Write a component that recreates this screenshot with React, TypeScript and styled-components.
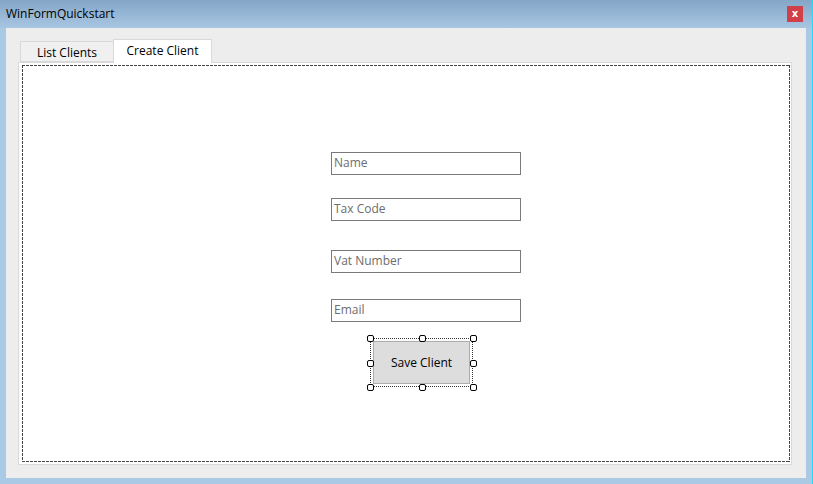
import React from "react";
import styled, { createGlobalStyle } from "styled-components";

const GlobalStyle = createGlobalStyle`
  html, body {
    margin: 0;
    padding: 0;
    background: #a9c9e5;
  }
  * {
    box-sizing: border-box;
  }
`;

const dashes = (color: string, on: number, off: number) => `
  repeating-linear-gradient(90deg, ${color} 0 ${on}px, transparent ${on}px ${on + off}px) left top / 100% 1px no-repeat,
  repeating-linear-gradient(90deg, ${color} 0 ${on}px, transparent ${on}px ${on + off}px) left bottom / 100% 1px no-repeat,
  repeating-linear-gradient(180deg, ${color} 0 ${on}px, transparent ${on}px ${on + off}px) left top / 1px 100% no-repeat,
  repeating-linear-gradient(180deg, ${color} 0 ${on}px, transparent ${on}px ${on + off}px) right top / 1px 100% no-repeat
`;

const Window = styled.div`
  width: 813px;
  height: 484px;
  display: flex;
  flex-direction: column;
  background: linear-gradient(180deg, #84a6c7 0px, #a7c6e2 28px, #a9c9e5 29px);
  border-right: 1px solid #1fdcf8;
  font-family: "Open Sans", "Noto Sans", sans-serif;
`;

const TitleBar = styled.div`
  height: 28px;
  flex: none;
  display: flex;
  align-items: center;
  justify-content: space-between;
  padding: 0 9px 2px 6px;
`;

const Title = styled.span`
  font-size: 12px;
  color: #000;
`;

const CloseButton = styled.div`
  width: 16px;
  height: 16px;
  margin-top: 2px;
  background: #d13f48;
  color: #fff;
  font-family: "DejaVu Sans", sans-serif;
  font-weight: bold;
  font-size: 10px;
  line-height: 15px;
  text-align: center;
`;

const Client = styled.div`
  flex: 1;
  margin: 0 6px 6px 6px;
  background: #ededed;
  padding: 12px 14px 13px 12px;
  display: flex;
  flex-direction: column;
`;

const TabStrip = styled.div`
  height: 22px;
  display: flex;
  align-items: flex-end;
  padding-left: 2px;
  position: relative;
  z-index: 1;
`;

const Tab = styled.div<{ $active?: boolean }>`
  height: ${(p) => (p.$active ? "24px" : "21px")};
  margin-bottom: ${(p) => (p.$active ? "-1px" : "0")};
  width: ${(p) => (p.$active ? "99px" : "94px")};
  border: 1px solid #d9d9d9;
  border-bottom: ${(p) => (p.$active ? "none" : "1px solid #d9d9d9")};
  margin-left: ${(p) => (p.$active ? "-1px" : "0")};
  background: ${(p) => (p.$active ? "#fff" : "#f0f0f0")};
  font-size: 12px;
  color: #000;
  display: flex;
  align-items: center;
  justify-content: center;
  padding-top: ${(p) => (p.$active ? "0" : "2px")};
  padding-bottom: ${(p) => (p.$active ? "3px" : "0")};
`;

const Panel = styled.div`
  flex: 1;
  border: 1px solid #d9d9d9;
  background: #fff;
  padding: 2px 1px 2px 3px;
  display: flex;
`;

const DesignSurface = styled.div`
  flex: 1;
  background: ${dashes("#444", 3, 1)}, #fff;
  padding: 87px 0 0 309px;
  display: flex;
  flex-direction: column;
  align-items: flex-start;
`;

const Field = styled.div<{ $gap: number }>`
  width: 190px;
  height: 23px;
  margin-bottom: ${(p) => p.$gap}px;
  border: 1px solid #7a7a7a;
  background: #fff;
  color: #6d6d6d;
  font-size: 12px;
  line-height: 20px;
  padding-left: 2px;
`;

const Selection = styled.div`
  position: relative;
  margin-left: 39px;
  margin-top: -7px;
  width: 103px;
  height: 49px;
  padding: 3px 2px 2px 3px;
  background: ${dashes("#333", 1, 1)};
`;

const SaveButton = styled.div`
  width: 97px;
  height: 43px;
  background: #dddddd;
  border: 1px solid #adadad;
  font-size: 12px;
  color: #000;
  display: flex;
  align-items: center;
  justify-content: center;
`;

const Handle = styled.span`
  position: absolute;
  width: 7px;
  height: 7px;
  margin: -3px 0 0 -3px;
  border: 1px solid #000;
  border-radius: 2px;
  background: #fff;
`;

const handles = [
  [0, 0],
  [50, 0],
  [100, 0],
  [0, 50],
  [100, 50],
  [0, 100],
  [50, 100],
  [100, 100],
];

export default function App() {
  return (
    <>
      <GlobalStyle />
      <Window>
        <TitleBar>
          <Title>WinFormQuickstart</Title>
          <CloseButton>x</CloseButton>
        </TitleBar>
        <Client>
          <TabStrip>
            <Tab>List Clients</Tab>
            <Tab $active>Create Client</Tab>
          </TabStrip>
          <Panel>
            <DesignSurface>
              <Field $gap={23}>Name</Field>
              <Field $gap={29}>Tax Code</Field>
              <Field $gap={26}>Vat Number</Field>
              <Field $gap={23}>Email</Field>
              <Selection>
                <SaveButton>Save Client</SaveButton>
                {handles.map(([x, y]) => (
                  <Handle key={`${x}-${y}`} style={{ left: `${x}%`, top: `${y}%` }} />
                ))}
              </Selection>
            </DesignSurface>
          </Panel>
        </Client>
      </Window>
    </>
  );
}
